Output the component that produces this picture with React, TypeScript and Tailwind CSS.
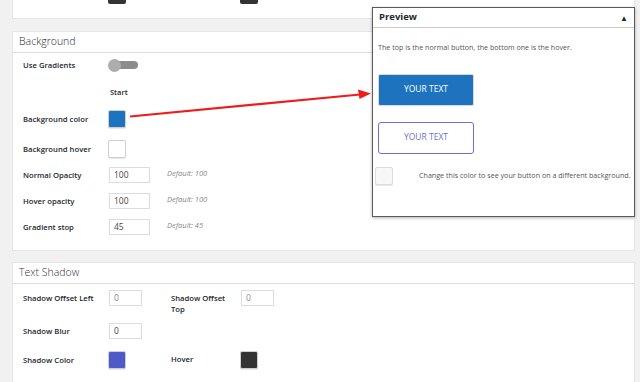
import React from "react";

const font = { fontFamily: "'Open Sans', 'Noto Sans', sans-serif" };

const Label = ({ children }: { children: React.ReactNode }) => (
  <div className="w-[85px] shrink-0 text-[7.7px] font-semibold leading-[11px] text-[#23282d]">{children}</div>
);

const Swatch = ({ color }: { color: string }) => (
  <div
    className="h-[18px] w-[18px] rounded-[2px] border border-[#cfcfcf] shadow-[0_1px_1px_rgba(0,0,0,0.1)]"
    style={{ background: color }}
  />
);

const NumInput = ({ value, w = "w-[41px]", muted = false }: { value: string; w?: string; muted?: boolean }) => (
  <div
    className={`flex h-[16px] ${w} items-center border border-[#dddddd] bg-white pl-[4px] text-[8.5px] ${
      muted ? "text-[#8a8a8a]" : "text-[#444]"
    }`}
  >
    {value}
  </div>
);

export default function App() {
  return (
    <div className="relative h-[382px] w-[640px] overflow-hidden bg-[#f1f1f1]" style={font}>
      {/* panel above, mostly scrolled off */}
      <div className="relative ml-[12px] mr-[5px] h-[19px] border-b border-r border-l border-[#e5e5e5] bg-white">
        <div className="absolute left-[95px] top-0 h-[4px] w-[18px] rounded-b-[2px] bg-[#333]" />
        <div className="absolute left-[227px] top-0 h-[4px] w-[18px] rounded-b-[2px] bg-[#333]" />
      </div>

      {/* Background */}
      <div className="ml-[12px] mr-[5px] mt-[12px] border border-[#e5e5e5] bg-white">
        <div className="flex h-[21px] items-center border-b border-[#dcdcdc] pl-[6px] text-[10.5px] font-light text-[#23282d]">
          Background
        </div>
        <div className="pb-[15px] pl-[10px]">
          <div className="mt-[5px] flex h-[14px] items-center">
            <Label>Use Gradients</Label>
            <div className="relative h-[13px] w-[30px]">
              <div className="absolute left-[4px] top-[2.5px] h-[8px] w-[26px] rounded-full bg-[#8c8c8c]" />
              <div className="absolute left-0 top-0 h-[13px] w-[13px] rounded-full bg-[#adadad]" />
            </div>
          </div>
          <div className="mt-[16px] flex h-[10px] items-center">
            <div className="w-[87px]" />
            <div className="text-[7.5px] font-semibold text-[#23282d]">Start</div>
          </div>
          <div className="mt-[12px] flex h-[18px] items-center">
            <Label>Background color</Label>
            <Swatch color="#1e73be" />
          </div>
          <div className="mt-[12px] flex h-[18px] items-center">
            <Label>Background hover</Label>
            <Swatch color="#ffffff" />
          </div>
          {[
            ["Normal Opacity", "100", "Default: 100"],
            ["Hover opacity", "100", "Default: 100"],
            ["Gradient stop", "45", "Default: 45"],
          ].map(([l, v, d], i) => (
            <div key={l} className={`${i === 0 ? "mt-[9px]" : "mt-[10px]"} flex h-[16px] items-center`}>
              <Label>{l}</Label>
              <div className="ml-[1px]">
                <NumInput value={v} />
              </div>
              <div className="-mt-[3px] ml-[17px] text-[7.5px] italic text-[#888]">{d}</div>
            </div>
          ))}
        </div>
      </div>

      {/* Text Shadow */}
      <div className="ml-[12px] mr-[5px] mt-[11px] h-[140px] border border-[#e5e5e5] bg-white">
        <div className="flex h-[21px] items-center border-b border-[#dcdcdc] pl-[6px] text-[10.5px] font-light text-[#3a3030]">
          Text Shadow
        </div>
        <div className="pl-[10px]">
          <div className="mt-[6px] flex">
            <div className="flex h-[16px] w-[148px] items-start">
              <div className="mt-[3px]">
                <Label>Shadow Offset Left</Label>
              </div>
              <div className="ml-[1px]">
                <NumInput value="0" w="w-[33px]" muted />
              </div>
            </div>
            <div className="flex items-start">
              <div className="mt-[3px] w-[70px] text-[7.7px] font-semibold leading-[11px] text-[#23282d]">
                Shadow Offset
                <br />
                Top
              </div>
              <NumInput value="0" w="w-[33px]" muted />
            </div>
          </div>
          <div className="mt-[8px] flex h-[16px] items-center">
            <Label>Shadow Blur</Label>
            <div className="ml-[1px]">
              <NumInput value="0" w="w-[33px]" />
            </div>
          </div>
          <div className="mt-[12px] flex h-[18px] items-center">
            <Label>Shadow Color</Label>
            <div className="w-[63px]">
              <Swatch color="#5059c9" />
            </div>
            <div className="w-[69px] text-[7.7px] font-semibold text-[#23282d]">Hover</div>
            <Swatch color="#333333" />
          </div>
        </div>
      </div>

      {/* Preview floating box */}
      <div className="absolute left-[372px] top-[7px] h-[210px] w-[263px] border border-[#5a5a5a] bg-white shadow-[0_1px_3px_rgba(0,0,0,0.3)]">
        <div className="flex h-[20px] items-center justify-between border-b border-[#cccccc] px-[6px]">
          <span className="text-[9.5px] font-bold text-[#23282d]">Preview</span>
          <span className="text-[8px] leading-none text-[#23282d]">▲</span>
        </div>
        <div className="mt-[14px] whitespace-nowrap pl-[5px] text-[7.15px] text-[#555]">
          The top is the normal button, the bottom one is the hover.
        </div>
        <div className="ml-[5px] mt-[21px] flex h-[32px] w-[96px] items-center justify-center rounded-[2px] border border-[#d8d8d8] bg-[#1e73be] text-[8.5px] text-white">
          YOUR TEXT
        </div>
        <div className="ml-[5px] mt-[16px] flex h-[32px] w-[96px] items-center justify-center rounded-[3px] border-[1.5px] border-[#6b70d8] bg-white text-[8.5px] text-[#6b70d8]">
          YOUR TEXT
        </div>
        <div className="mt-[13px] flex items-center pl-[2px]">
          <div className="h-[18px] w-[18px] shrink-0 rounded-[2px] border border-[#dddddd] bg-[#f7f7f7] shadow-[0_1px_1px_rgba(0,0,0,0.1)]" />
          <div className="ml-[26px] whitespace-nowrap text-[7.15px] text-[#555]">
            Change this color to see your button on a different background.
          </div>
        </div>
      </div>

      {/* red arrow */}
      <svg className="absolute left-0 top-0" width="640" height="382" viewBox="0 0 640 382">
        <line x1="130" y1="116.5" x2="360" y2="94.5" stroke="#ee1c1c" strokeWidth="2.2" />
        <polygon points="371,93.5 358,89.5 359.5,99" fill="#ee1c1c" />
      </svg>
    </div>
  );
}
